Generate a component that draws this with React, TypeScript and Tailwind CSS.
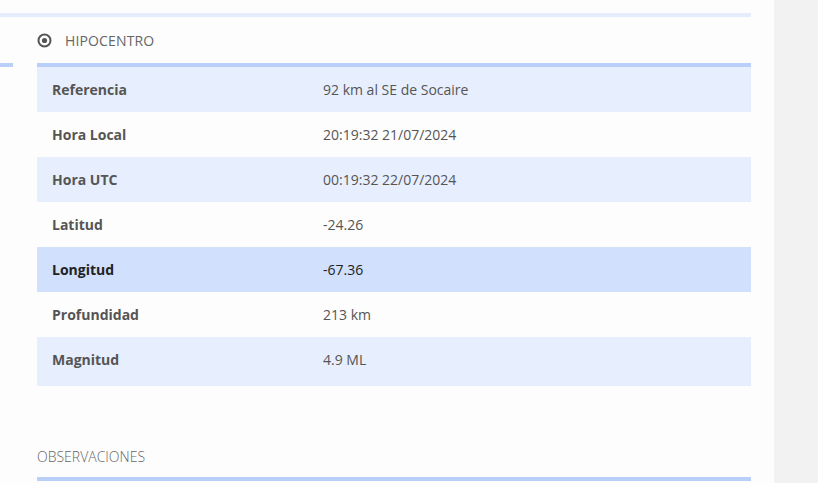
import { CircleDot } from "lucide-react";

interface Row {
  label: string;
  value: string;
  striped: boolean;
  active?: boolean;
}

const ROWS: Row[] = [
  { label: "Referencia", value: "92 km al SE de Socaire", striped: true },
  { label: "Hora Local", value: "20:19:32 21/07/2024", striped: false },
  { label: "Hora UTC", value: "00:19:32 22/07/2024", striped: true },
  { label: "Latitud", value: "-24.26", striped: false },
  { label: "Longitud", value: "-67.36", striped: true, active: true },
  { label: "Profundidad", value: "213 km", striped: false },
  { label: "Magnitud", value: "4.9 ML", striped: true },
];

function DotCircle() {
  return (
    <svg width="15" height="15" viewBox="0 0 15 15" className="text-[#555]">
      <circle cx="7.5" cy="7.5" r="6" fill="none" stroke="currentColor" strokeWidth="2" />
      <circle cx="7.5" cy="7.5" r="2.6" fill="currentColor" />
    </svg>
  );
}

export default function App() {
  return (
    <div
      className="flex h-[483px] w-full overflow-hidden bg-[#f2f2f2] text-[14px] text-[#555]"
      style={{ fontFamily: '"Open Sans", sans-serif' }}
    >
      <div className="w-[774px] shrink-0 bg-[#fdfdfd] pt-[13px]">
        <div className="h-[4px] w-[751px] bg-[#e5edfc]" />

        <div className="flex">
          <div className="mt-[46px] h-[4px] w-[13px] bg-[#b9cef9]" />

          <div className="ml-[24px] w-[714px]">
            <div className="flex h-[46px] items-center gap-[13px] pt-[1px] text-[#666]">
              <DotCircle />
              <span className="uppercase tracking-[0.01em]">Hipocentro</span>
            </div>

            <div className="border-t-4 border-[#b9cef9]">
              {ROWS.map((r, i) => (
                <div
                  key={r.label}
                  className={`flex items-center ${
                    i === ROWS.length - 1 ? "h-[49px] pb-[4px]" : "h-[45px]"
                  } ${
                    r.active
                      ? "bg-[#d1e0fd] text-[#222]"
                      : r.striped
                      ? "bg-[#e7eefd]"
                      : "bg-transparent"
                  }`}
                >
                  <div className="w-[286px] pl-[15px] font-bold">{r.label}</div>
                  <div>{r.value}</div>
                </div>
              ))}
            </div>

            <div className="mt-[55px] flex h-[30px] items-center font-light uppercase text-[#666]">
              Observaciones
            </div>
            <div className="mt-[6px] h-[4px] bg-[#b9cef9]" />
          </div>
        </div>
      </div>
    </div>
  );
}
